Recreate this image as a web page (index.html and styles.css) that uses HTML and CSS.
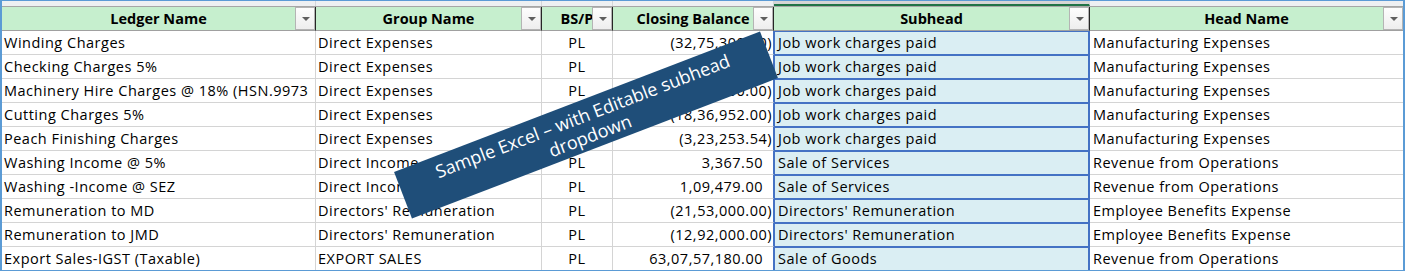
FILE: index.html
```html
<!DOCTYPE html>
<html>
<head>
<meta charset="utf-8">
<link rel="stylesheet" href="styles.css">
</head>
<body>
<div class="sheet">
  <div class="strip">
    <div class="sc"></div><div class="sc"></div><div class="sc"></div><div class="sc"></div><div class="sc sel"></div><div class="sc last"></div>
  </div>
  <div class="row head">
    <div class="c hc">Ledger Name<span class="dd"></span></div>
    <div class="c hc">Group Name<span class="dd"></span></div>
    <div class="c hc">BS/P<span class="dd"></span></div>
    <div class="c hc">Closing Balance<span class="dd"></span></div>
    <div class="c hc subh">Subhead<span class="dd"></span></div>
    <div class="c hc last">Head Name<span class="dd"></span></div>
  </div>

  <div class="row"><div class="c">Winding Charges</div><div class="c">Direct Expenses</div><div class="c ctr">PL</div><div class="c num">(32,75,300.00)</div><div class="c sub">Job work charges paid</div><div class="c last">Manufacturing Expenses</div></div>
  <div class="row"><div class="c">Checking Charges 5%</div><div class="c">Direct Expenses</div><div class="c ctr">PL</div><div class="c num">(1,08,450.00)</div><div class="c sub">Job work charges paid</div><div class="c last">Manufacturing Expenses</div></div>
  <div class="row"><div class="c">Machinery Hire Charges @ 18% (HSN.9973</div><div class="c">Direct Expenses</div><div class="c ctr">PL</div><div class="c num">(4,52,600.00)</div><div class="c sub">Job work charges paid</div><div class="c last">Manufacturing Expenses</div></div>
  <div class="row"><div class="c">Cutting Charges 5%</div><div class="c">Direct Expenses</div><div class="c ctr">PL</div><div class="c num">(18,36,952.00)</div><div class="c sub">Job work charges paid</div><div class="c last">Manufacturing Expenses</div></div>
  <div class="row"><div class="c">Peach Finishing Charges</div><div class="c">Direct Expenses</div><div class="c ctr">PL</div><div class="c num">(3,23,253.54)</div><div class="c sub">Job work charges paid</div><div class="c last">Manufacturing Expenses</div></div>
  <div class="row"><div class="c">Washing Income @ 5%</div><div class="c">Direct Income</div><div class="c ctr">PL</div><div class="c num pos">3,367.50</div><div class="c sub">Sale of Services</div><div class="c last">Revenue from Operations</div></div>
  <div class="row"><div class="c">Washing -Income @ SEZ</div><div class="c">Direct Income</div><div class="c ctr">PL</div><div class="c num pos">1,09,479.00</div><div class="c sub">Sale of Services</div><div class="c last">Revenue from Operations</div></div>
  <div class="row"><div class="c">Remuneration to MD</div><div class="c">Directors' Remuneration</div><div class="c ctr">PL</div><div class="c num">(21,53,000.00)</div><div class="c sub">Directors' Remuneration</div><div class="c last">Employee Benefits Expense</div></div>
  <div class="row"><div class="c">Remuneration to JMD</div><div class="c">Directors' Remuneration</div><div class="c ctr">PL</div><div class="c num">(12,92,000.00)</div><div class="c sub">Directors' Remuneration</div><div class="c last">Employee Benefits Expense</div></div>
  <div class="row lastrow"><div class="c">Export Sales-IGST (Taxable)</div><div class="c">EXPORT SALES</div><div class="c ctr">PL</div><div class="c num pos">63,07,57,180.00</div><div class="c sub">Sale of Goods</div><div class="c last">Revenue from Operations</div></div>

  <div class="banner">Sample Excel – with Editable subhead<br>dropdown</div>
</div>
</body>
</html>
```

FILE: styles.css
```css
* { box-sizing: border-box; }
html, body { margin: 0; padding: 0; background: #fff; }
body { font-family: "Open Sans", "Noto Sans", sans-serif; font-size: 14.5px; color: #000; }

.sheet {
  position: relative;
  width: 1405px;
  height: 271px;
  overflow: hidden;
  border-left: 2px solid #5b9bd5;
  border-right: 2px solid #5b9bd5;
  border-top: 1px solid #5b9bd5;
  border-bottom: 1px solid #5b9bd5;
}

.strip, .row {
  display: grid;
  grid-template-columns: 314px 226px 71px 161px 316px 1fr;
}

.strip { height: 6px; border-bottom: 1px solid #a6a6a6; background: #eef0f2; }
.sc { border-right: 1px solid #d4d6d9; }
.sc.sel { background: #d5d5d5; border-bottom: 2px solid #217346; }
.sc.last { border-right: none; }

.row { height: 24px; }
.c {
  position: relative;
  height: 24px;
  line-height: 22px;
  padding: 1px 2px 0;
  letter-spacing: 0.5px;
  white-space: nowrap;
  overflow: hidden;
  border-right: 1px solid #d4d4d4;
  border-bottom: 1px solid #d4d4d4;
}
.c.last { border-right: none; padding-left: 3px; }
.lastrow .c { border-bottom: none; }

.head .hc {
  background: #c6efce;
  font-weight: bold;
  letter-spacing: 0;
  text-align: center;
  border-right: 1px solid #262626;
  border-bottom: 1px solid #a0a0a0;
  padding: 1px 0 0;
}
.head .hc.last { border-right: none; }

.dd {
  position: absolute;
  right: 0;
  top: 0;
  width: 20px;
  height: 23px;
  background: linear-gradient(#fdfdfd, #eeeeee);
  border: 1px solid #b4b4b4;
}
.dd::after {
  content: "";
  position: absolute;
  left: 6px;
  top: 9px;
  border-left: 4px solid transparent;
  border-right: 4px solid transparent;
  border-top: 4px solid #5f5f5f;
}

.ctr { text-align: center; }
.num { text-align: right; padding-right: 1px; border-right-color: #4472c4; }
.num.pos { padding-right: 10px; }

.sub {
  background: #daeef3;
  padding-left: 4px;
  border-right-color: #4472c4;
  border-bottom-color: #4472c4;
  box-shadow: inset 1px 1px 0 #4472c4, inset -1px 0 0 #4472c4;
}
.lastrow .sub { border-bottom: none; }

.banner {
  position: absolute;
  left: 388px;
  top: 99px;
  width: 392px;
  height: 50px;
  background: #1f4e79;
  color: #fff;
  font-size: 18px;
  line-height: 21px;
  text-align: center;
  padding-top: 5px;
  transform: rotate(-21deg);
}
```
